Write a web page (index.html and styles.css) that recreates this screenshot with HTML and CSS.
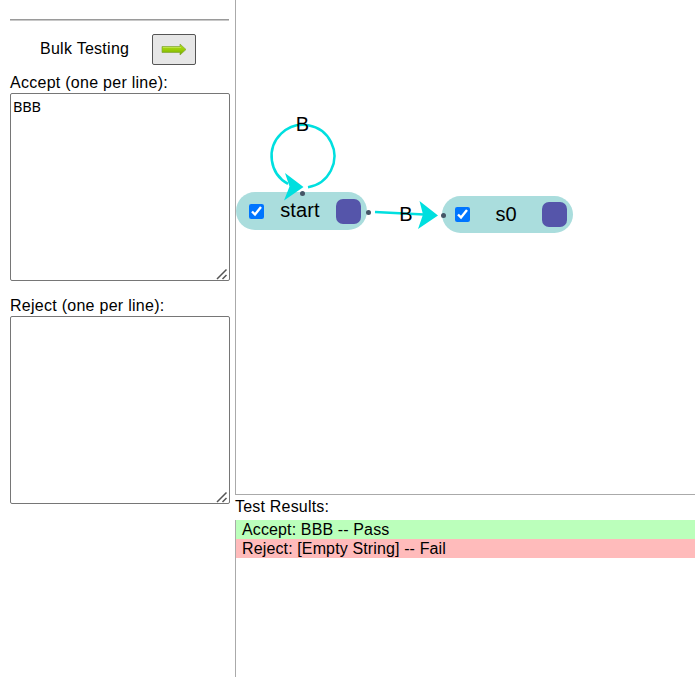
FILE: index.html
```
<!DOCTYPE html>
<html lang="en">
<head>
<meta charset="utf-8">
<title>Automaton Tester</title>
<link rel="stylesheet" href="styles.css">
</head>
<body>
<div class="app">
  <aside class="sidebar">
    <hr class="rule">
    <div class="bulk">
      <span>Bulk Testing</span>
      <button class="run" type="button" aria-label="Run">
        <svg width="26" height="14" viewBox="0 0 26 14">
          <defs><linearGradient id="green" x1="0" y1="0" x2="0" y2="1"><stop offset="0" stop-color="#b4dc20"/><stop offset=".5" stop-color="#9bce08"/><stop offset="1" stop-color="#72a800"/></linearGradient></defs>
          <path d="M1 3.500h18V1L25 6.500L19 12V9.500H1z" fill="url(#green)" stroke="#83a83a" stroke-width=".7"/>
          <path d="M2 4.500h18" stroke="#c4e654" stroke-width=".8"/>
        </svg>
      </button>
    </div>
    <label class="label" for="accept">Accept (one per line):</label>
    <div class="field"><textarea class="cases" id="accept" spellcheck="false">BBB</textarea><svg class="grip" width="12" height="12"><path d="M1 11L10.500 1.500M6.500 11L10.500 7"/></svg></div>
    <label class="label second" for="reject">Reject (one per line):</label>
    <div class="field"><textarea class="cases" id="reject"></textarea><svg class="grip" width="12" height="12"><path d="M1 11L10.500 1.500M6.500 11L10.500 7"/></svg></div>
  </aside>
  <main class="main">
    <section class="canvas">
      <div class="node start"><input type="checkbox" checked><span class="name">start</span><i class="handle"></i></div>
      <div class="node s0"><input type="checkbox" checked><span class="name">s0</span><i class="handle"></i></div>
      <svg class="edges" width="459" height="494" viewBox="236 0 459 494">
        <g fill="none" stroke="#00dfdf" stroke-width="2.500">
          <path d="M308 187.200A31.400 31.400 0 1 0 288 183.800"/>
          <path d="M375 212L424 214.500"/>
        </g>
        <g fill="#00dfdf">
          <path d="M303.500 187L285 173L289.500 186.500L284 200.500z"/>
          <path d="M438 215.500L419.500 201L423 214.500L418 229z"/>
        </g>
        <g fill="#456">
          <circle cx="302.500" cy="193.500" r="2.500"/><circle cx="368.500" cy="212.500" r="2.500"/><circle cx="443.500" cy="215.500" r="2.500"/>
        </g>
        <g class="edge-label"><text x="302.500" y="131">B</text><text x="406" y="221">B</text></g>
      </svg>
    </section>
    <div class="heading">Test Results:</div>
    <section class="results">
      <div class="pass">Accept: BBB -- Pass</div>
      <div class="fail">Reject: [Empty String] -- Fail</div>
    </section>
  </main>
</div>
</body>
</html>
```
FILE: styles.css
```
* { box-sizing: border-box; }
body { margin: 0; background: #fff; color: #000; font: 16px/18px "Liberation Sans", Arial, sans-serif; }
.app { display: flex; width: 695px; height: 677px; overflow: hidden; }
.sidebar { width: 235px; padding: 19px 5px 0 10px; letter-spacing: .27px; }
.rule { width: 219px; height: 2px; margin: 0; border: 0; border-top: 1px solid #9a9a9a; border-bottom: 1px solid #c8c8c8; }
.bulk { display: flex; align-items: center; height: 31px; margin: 13px 0 8px; padding-left: 30px; gap: 23px; }
.bulk span { width: 89px; white-space: nowrap; position: relative; top: -1px; }
.run { display: flex; align-items: center; justify-content: center; width: 44px; height: 31px; padding: 0; border: 1px solid #555; border-radius: 2px; background: #e6e6e6; }
.label { display: block; height: 20px; line-height: 19px; }
.second { margin-top: 15px; }
.field { position: relative; width: 220px; height: 188px; }
.cases { display: block; width: 220px; height: 188px; margin: 0; padding: 2px; border: 1px solid #767676; border-radius: 2px; background: #fff; font: 14.5px/20px "Noto Sans", sans-serif; letter-spacing: -.2px; resize: none; }
.grip { position: absolute; right: 2px; bottom: 1px; fill: none; stroke: #555; stroke-width: 1.5; }
.main { display: flex; flex-direction: column; width: 460px; }
.canvas { position: relative; height: 495px; border-left: 1px solid #aaa; border-bottom: 1px solid #aaa; }
.node { position: absolute; display: flex; align-items: center; width: 131px; height: 38px; padding: 0 6px 0 13px; border-radius: 19px; background: #aadddd; font-size: 20px; }
.node input { width: 15px; height: 15px; margin: 0; }
.name { flex: 1; text-align: center; position: relative; top: -1px; }
.start .name { letter-spacing: .15px; }
.handle { width: 25px; height: 25px; border-radius: 7px; background: #5555aa; }
.start { left: 0; top: 192px; }
.s0 { left: 206px; top: 196px; height: 37px; }
.edges { position: absolute; left: 0; top: 0; }
.edge-label { font-size: 20px; text-anchor: middle; }
.heading { height: 25px; line-height: 23px; letter-spacing: .2px; }
.results { flex: 1; border-left: 1px solid #aaa; letter-spacing: .13px; }
.results div { height: 19px; line-height: 19px; padding-left: 6px; }
.pass { background: #bbffbb; }
.fail { background: #ffbbbb; }
```
